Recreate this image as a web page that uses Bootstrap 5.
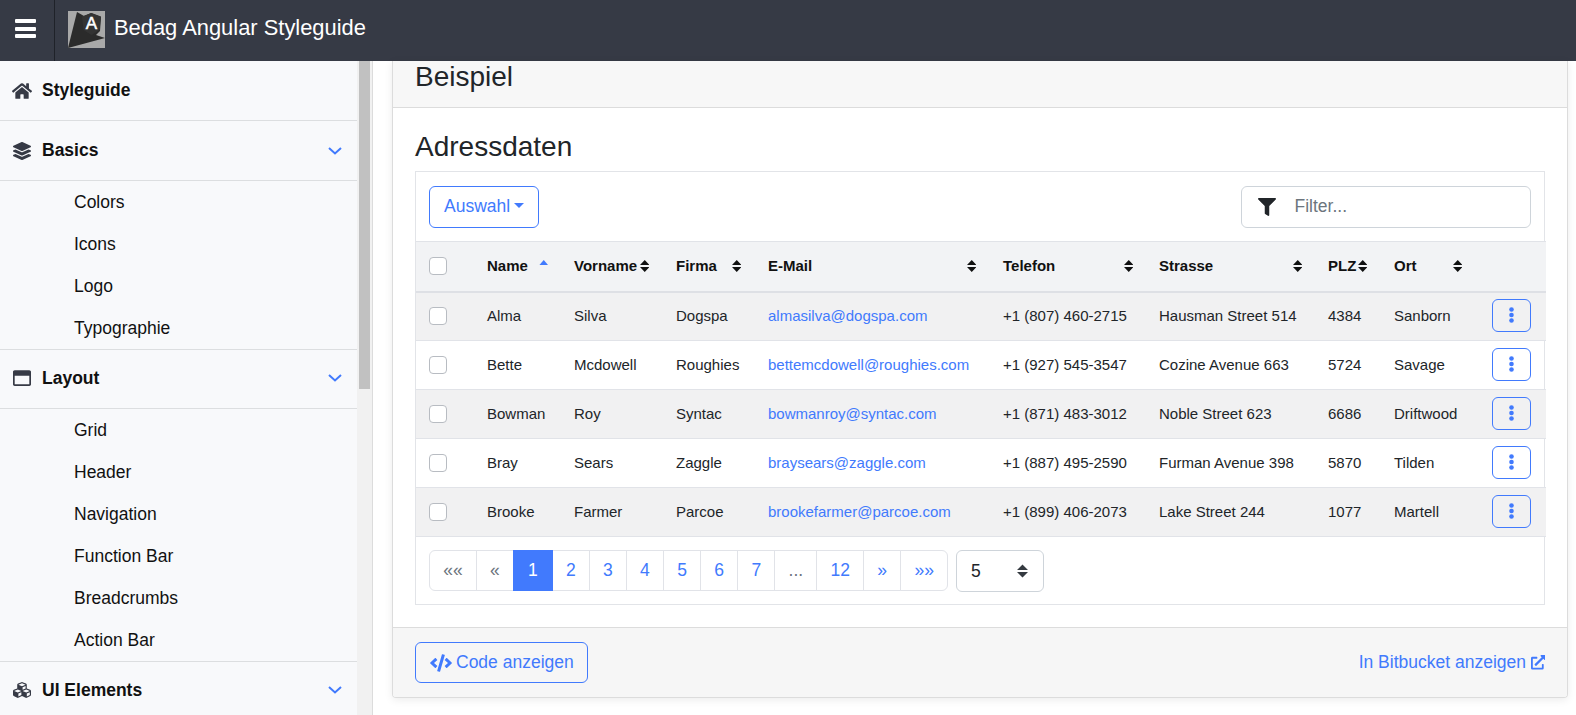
<!DOCTYPE html>
<html lang="de">
<head>
<meta charset="utf-8">
<title>Bedag Angular Styleguide</title>
<link rel="stylesheet" href="https://cdn.jsdelivr.net/npm/bootstrap@5.3.0/dist/css/bootstrap.min.css">
<style>
html,body{height:715px;overflow:hidden}
body{font-family:"Liberation Sans",Arial,sans-serif;font-size:17.5px;color:#212529;background:#fff}
svg{fill:currentColor;display:inline-block}
.topbar{height:61px;background:#363a45;color:#fff}
.burger{width:55px;height:61px;border-right:1px solid #1f2229;padding:0 4px 4px 0;gap:3.5px}
.burger span{display:block;width:21px;height:4px;background:#fff;border-radius:1px}
.brandname{font-size:21.9px;margin:0 0 4px 9px}
.logo{margin:0 0 2px 13px}
.logotext{stroke:#fff;stroke-width:.5px}
.shell{height:654px}
.sidenav{width:373px;background:#f8f9fb;border-right:1px solid #dcdcdc;overflow:hidden}
.navcol{width:357px}
.navhead{height:60px;padding:0 15px 0 13px;border-bottom:1px solid #dcdee0;font-weight:700;color:#111}
.subnav + .navhead{height:59px;padding-bottom:2px}
.navhead .ico{width:18px;height:18px;color:#363a45;margin-right:11px;flex:none}
.navhead .ico-wide{width:20px;margin-left:-1px;margin-right:10px}
.navhead .chev{color:#417afd;margin-left:auto}
.subnav{border-bottom:1px solid #dcdee0;margin:0;padding:0;list-style:none}
.subnav li{height:42px;line-height:42px;padding-left:74px;color:#111}
.trackbar{width:15px;background:#f1f1f1;padding-left:2px}
.thumbbar{width:11px;height:328px;background:#c1c1c1}
.mainarea{padding:0 8px 0 19px;min-width:0}
.democard{box-shadow:0 2px 8px rgba(0,0,0,.08);border:1px solid #dcdcdc;border-top:0;border-radius:0 0 4px 4px;overflow:hidden}
.demohead{height:47px;background:#f7f7f7;border-bottom:1px solid #dcdcdc;padding:0 22px 14px;font-size:28px;line-height:32px}
.demobody{padding:22px 22px 22px;height:519px}
.h-addr{font-size:28px;line-height:34px;margin:0 0 7px}
.gridbox{border:1px solid #e2e4e8;height:434px}
.tools{height:69px;padding:0 13px}
.btn-blue{--bs-btn-color:#417afd;--bs-btn-border-color:#417afd;--bs-btn-hover-bg:#417afd;--bs-btn-hover-border-color:#417afd;--bs-btn-active-bg:#417afd;--bs-btn-active-border-color:#417afd;font-size:17.5px;height:42px;padding:0 14px}
.btn-blue.dropdown-toggle::after{margin-left:4px}
.codebtn{height:41px;padding-right:13px}
.filterbox{width:290px;height:42px;border:1px solid #ced4da;border-radius:6px;padding-left:16px;gap:18.5px}
.filterbox svg{color:#212529;flex:none}
.filterbox input{border:0;outline:0;padding:0;font-size:17.5px;width:200px;background:transparent}
.filterbox input::placeholder{color:#6c757d}
.dtable{table-layout:fixed;width:100%;margin:0;font-size:15px;--bs-table-striped-bg:#f1f1f2;--bs-table-border-color:#e1e3e8}
.dtable th,.dtable td{padding:0 14px;vertical-align:middle;height:49px;white-space:nowrap;overflow:hidden}
.dtable th:first-child,.dtable td:first-child{padding-left:13px}
.dtable th:last-child,.dtable td:last-child{padding-right:15px}
.dtable thead th{background:#f2f3f5;height:50px;color:#111;border-bottom:2px solid #dee0e5;border-top:1px solid #e1e3e8;overflow:visible}
.c1{width:57px}.c2{width:87px}.c3{width:102px}.c4{width:92px}.c5{width:235px}.c6{width:156px}.c7{width:169px}.c8{width:66px}.c9{width:98px}.c10{width:68px}
.dtable a{color:#417afd;text-decoration:none}
.hcell{display:flex;justify-content:space-between;align-items:center}
.sorter{display:block;width:9.5px;height:12px;flex:none;margin-right:-1px}
.dtable th:nth-child(6) .sorter,.dtable th:nth-child(7) .sorter{margin-right:-2px}
.dtable th:nth-child(9) .sorter{margin-right:2px}
.sorter.asc{color:#417afd;height:5.5px;margin-top:-8px;margin-right:-2px}
.rowbox{appearance:none;display:block;width:18px;height:18px;border:1px solid #b8bcc2;border-radius:4px;background:#fff;margin:0}
.rowbtn{width:39px;height:33px;padding:0;display:flex;align-items:center;justify-content:center;--bs-btn-color:#417afd;--bs-btn-border-color:#417afd;margin:0 0 2px auto}
.pagerow{padding:13px 13px 0}
.pagination{--bs-pagination-color:#417afd;--bs-pagination-padding-x:13.2px;--bs-pagination-padding-y:0;--bs-pagination-font-size:17.5px;--bs-pagination-border-color:#e1e3e8;--bs-pagination-disabled-color:#6c757d;--bs-pagination-disabled-bg:#fff;--bs-pagination-disabled-border-color:#e1e3e8;--bs-pagination-active-bg:#417afd;--bs-pagination-active-border-color:#417afd;margin:0}
.pagination .page-link{line-height:39px}
.pagination .active .page-link{padding-left:14px;padding-right:14px}
.sizepick{width:88px;height:42px;border:1px solid #ced4da;border-radius:6px;padding:0 15px 0 14px;margin-left:8px}
.demofoot{height:70px;background:#f6f6f6;border-top:1px solid #dcdcdc;padding:0 22px}
.bb-link{color:#417afd;text-decoration:none;gap:4.5px}
</style>
</head>
<body>
<header class="topbar d-flex align-items-center">
  <div class="burger d-flex flex-column align-items-center justify-content-center">
    <span></span><span></span><span></span>
  </div>
  <svg class="logo" width="37" height="37" viewBox="0 0 37 37">
    <rect width="37" height="37" fill="#a9a9a9"/>
    <path d="M9 1L16 5L23 2L33 6L32 20L28 24L37 27L0 37Z" fill="#2b2b2b"/>
    <path d="M23.5 2L33 5.500L31.500 19L23.500 24L15.500 19L14 5.500Z" fill="#333"/>
    <text class="logotext" x="23.500" y="18" text-anchor="middle" font-family="Liberation Sans" font-size="17" fill="#fff">A</text>
  </svg>
  <span class="brandname">Bedag Angular Styleguide</span>
</header>
<div class="shell d-flex">
  <nav class="sidenav d-flex flex-shrink-0">
    <div class="navcol">
      <div class="navhead d-flex align-items-center"><svg class="ico ico-wide" viewBox="0 0 576 512"><path d="M280.37 148.26L96 300.11V464a16 16 0 0 0 16 16l112.06-.29a16 16 0 0 0 15.92-16V368a16 16 0 0 1 16-16h64a16 16 0 0 1 16 16v95.64a16 16 0 0 0 16 16.05L464 480a16 16 0 0 0 16-16V300L295.67 148.26a12.19 12.19 0 0 0-15.3 0zM571.6 251.47L488 182.56V44.05a12 12 0 0 0-12-12h-56a12 12 0 0 0-12 12v72.61L318.47 43a48 48 0 0 0-61 0L4.34 251.47a12 12 0 0 0-1.6 16.9l25.5 31A12 12 0 0 0 45.15 301l235.22-193.74a12.19 12.19 0 0 1 15.3 0L530.9 301a12 12 0 0 0 16.9-1.6l25.5-31a12 12 0 0 0-1.7-16.93z"/></svg>Styleguide</div>
      <div class="navhead d-flex align-items-center"><svg class="ico" viewBox="0 0 512 512"><path d="M12.41 148.02l232.94 105.67c6.8 3.09 14.49 3.09 21.29 0l232.94-105.67c16.55-7.51 16.55-32.52 0-40.03L266.65 2.31a25.607 25.607 0 0 0-21.29 0L12.41 107.98c-16.55 7.51-16.55 32.53 0 40.04zm487.18 88.28l-58.09-26.33-161.64 73.27c-7.56 3.43-15.59 5.17-23.86 5.17s-16.29-1.74-23.86-5.17L70.51 209.97l-58.1 26.33c-16.55 7.5-16.55 32.5 0 40l232.94 105.59c6.8 3.08 14.49 3.08 21.29 0L499.59 276.3c16.55-7.5 16.55-32.5 0-40zm0 127.8l-57.87-26.23-161.86 73.37c-7.56 3.43-15.59 5.17-23.86 5.17s-16.29-1.74-23.86-5.17L70.29 337.87 12.41 364.1c-16.55 7.5-16.55 32.5 0 40l232.94 105.59c6.8 3.08 14.49 3.08 21.29 0L499.59 404.1c16.55-7.5 16.55-32.5 0-40z"/></svg>Basics<svg class="chev" width="14" height="8" viewBox="0 0 14 8"><path d="M1 1l6 5.500L13 1" fill="none" stroke="currentColor" stroke-width="2"/></svg></div>
      <ul class="subnav"><li>Colors</li><li>Icons</li><li>Logo</li><li>Typographie</li></ul>
      <div class="navhead d-flex align-items-center"><svg class="ico" viewBox="0 0 512 512"><path d="M464 32H48C21.5 32 0 53.5 0 80v352c0 26.5 21.5 48 48 48h416c26.5 0 48-21.5 48-48V80c0-26.5-21.5-48-48-48zm0 394c0 3.3-2.7 6-6 6H54c-3.3 0-6-2.7-6-6V192h416v234z"/></svg>Layout<svg class="chev" width="14" height="8" viewBox="0 0 14 8"><path d="M1 1l6 5.500L13 1" fill="none" stroke="currentColor" stroke-width="2"/></svg></div>
      <ul class="subnav"><li>Grid</li><li>Header</li><li>Navigation</li><li>Function Bar</li><li>Breadcrumbs</li><li>Action Bar</li></ul>
      <div class="navhead d-flex align-items-center"><svg class="ico" viewBox="0 0 512 512"><path d="M488.6 250.2L392 214V105.5c0-15-9.3-28.4-23.4-33.7l-100-37.5c-8.1-3.1-17.1-3.1-25.3 0l-100 37.5c-14.1 5.3-23.4 18.7-23.4 33.7V214l-96.6 36.2C9.3 255.5 0 268.9 0 283.9V394c0 13.6 7.7 26.1 19.900 32.2l100 50c10.1 5.1 22.1 5.1 32.2 0l103.9-52 103.9 52c10.1 5.1 22.1 5.1 32.2 0l100-50c12.2-6.1 19.9-18.6 19.9-32.2V283.9c0-15-9.3-28.4-23.4-33.7zM358 214.8l-85 31.9v-68.2l85-37v73.3zM154 104.1l102-38.2 102 38.2v.6l-102 41.4-102-41.4v-.6zm84 291.1l-85 42.5v-79.1l85-38.8v75.4zm0-112l-102 41.4-102-41.4v-.6l102-38.2 102 38.2v.6zm240 112l-85 42.5v-79.1l85-38.8v75.4zm0-112l-102 41.4-102-41.4v-.6l102-38.2 102 38.2v.6z"/></svg>UI Elements<svg class="chev" width="14" height="8" viewBox="0 0 14 8"><path d="M1 1l6 5.500L13 1" fill="none" stroke="currentColor" stroke-width="2"/></svg></div>
    </div>
    <div class="trackbar"><div class="thumbbar"></div></div>
  </nav>
  <main class="mainarea flex-grow-1">
    <section class="democard">
      <div class="demohead d-flex align-items-center">Beispiel</div>
      <div class="demobody">
        <h2 class="h-addr fw-normal">Adressdaten</h2>
        <div class="gridbox">
          <div class="tools d-flex align-items-center justify-content-between">
            <button class="btn btn-blue dropdown-toggle" type="button">Auswahl</button>
            <div class="filterbox d-flex align-items-center"><svg width="18" height="18" viewBox="0 0 512 512"><path d="M487.976 0H24.028C2.71 0-8.047 25.866 7.058 40.971L192 225.941V432c0 7.831 3.821 15.17 10.237 19.662l80 55.98C298.02 518.69 320 507.493 320 487.98V225.941l184.947-184.97C520.021 25.896 509.338 0 487.976 0z"/></svg><input type="text" placeholder="Filter..."></div>
          </div>
          <table class="table table-striped dtable">
            <colgroup><col class="c1"><col class="c2"><col class="c3"><col class="c4"><col class="c5"><col class="c6"><col class="c7"><col class="c8"><col class="c9"><col class="c10"></colgroup>
            <thead><tr>
              <th><input class="rowbox" type="checkbox"></th>
              <th><div class="hcell">Name<svg class="sorter asc" viewBox="0 0 10 5" preserveAspectRatio="none"><path d="M5 0l5 5H0z"/></svg></div></th>
              <th><div class="hcell">Vorname<svg class="sorter" viewBox="0 0 10 12" preserveAspectRatio="none"><path d="M5 0l5 5H0zM0 7h10l-5 5z"/></svg></div></th>
              <th><div class="hcell">Firma<svg class="sorter" viewBox="0 0 10 12" preserveAspectRatio="none"><path d="M5 0l5 5H0zM0 7h10l-5 5z"/></svg></div></th>
              <th><div class="hcell">E-Mail<svg class="sorter" viewBox="0 0 10 12" preserveAspectRatio="none"><path d="M5 0l5 5H0zM0 7h10l-5 5z"/></svg></div></th>
              <th><div class="hcell">Telefon<svg class="sorter" viewBox="0 0 10 12" preserveAspectRatio="none"><path d="M5 0l5 5H0zM0 7h10l-5 5z"/></svg></div></th>
              <th><div class="hcell">Strasse<svg class="sorter" viewBox="0 0 10 12" preserveAspectRatio="none"><path d="M5 0l5 5H0zM0 7h10l-5 5z"/></svg></div></th>
              <th><div class="hcell">PLZ<svg class="sorter" viewBox="0 0 10 12" preserveAspectRatio="none"><path d="M5 0l5 5H0zM0 7h10l-5 5z"/></svg></div></th>
              <th><div class="hcell">Ort<svg class="sorter" viewBox="0 0 10 12" preserveAspectRatio="none"><path d="M5 0l5 5H0zM0 7h10l-5 5z"/></svg></div></th>
              <th></th>
            </tr></thead>
            <tbody>
              <tr><td><input class="rowbox" type="checkbox"></td><td>Alma</td><td>Silva</td><td>Dogspa</td><td><a href="#">almasilva@dogspa.com</a></td><td>+1 (807) 460-2715</td><td>Hausman Street 514</td><td>4384</td><td>Sanborn</td><td><button class="btn rowbtn" type="button"><svg width="5" height="16" viewBox="0 0 5 16"><circle cx="2.500" cy="2.500" r="2.300"/><circle cx="2.500" cy="8" r="2.300"/><circle cx="2.500" cy="13.500" r="2.300"/></svg></button></td></tr>
              <tr><td><input class="rowbox" type="checkbox"></td><td>Bette</td><td>Mcdowell</td><td>Roughies</td><td><a href="#">bettemcdowell@roughies.com</a></td><td>+1 (927) 545-3547</td><td>Cozine Avenue 663</td><td>5724</td><td>Savage</td><td><button class="btn rowbtn" type="button"><svg width="5" height="16" viewBox="0 0 5 16"><circle cx="2.500" cy="2.500" r="2.300"/><circle cx="2.500" cy="8" r="2.300"/><circle cx="2.500" cy="13.500" r="2.300"/></svg></button></td></tr>
              <tr><td><input class="rowbox" type="checkbox"></td><td>Bowman</td><td>Roy</td><td>Syntac</td><td><a href="#">bowmanroy@syntac.com</a></td><td>+1 (871) 483-3012</td><td>Noble Street 623</td><td>6686</td><td>Driftwood</td><td><button class="btn rowbtn" type="button"><svg width="5" height="16" viewBox="0 0 5 16"><circle cx="2.500" cy="2.500" r="2.300"/><circle cx="2.500" cy="8" r="2.300"/><circle cx="2.500" cy="13.500" r="2.300"/></svg></button></td></tr>
              <tr><td><input class="rowbox" type="checkbox"></td><td>Bray</td><td>Sears</td><td>Zaggle</td><td><a href="#">braysears@zaggle.com</a></td><td>+1 (887) 495-2590</td><td>Furman Avenue 398</td><td>5870</td><td>Tilden</td><td><button class="btn rowbtn" type="button"><svg width="5" height="16" viewBox="0 0 5 16"><circle cx="2.500" cy="2.500" r="2.300"/><circle cx="2.500" cy="8" r="2.300"/><circle cx="2.500" cy="13.500" r="2.300"/></svg></button></td></tr>
              <tr><td><input class="rowbox" type="checkbox"></td><td>Brooke</td><td>Farmer</td><td>Parcoe</td><td><a href="#">brookefarmer@parcoe.com</a></td><td>+1 (899) 406-2073</td><td>Lake Street 244</td><td>1077</td><td>Martell</td><td><button class="btn rowbtn" type="button"><svg width="5" height="16" viewBox="0 0 5 16"><circle cx="2.500" cy="2.500" r="2.300"/><circle cx="2.500" cy="8" r="2.300"/><circle cx="2.500" cy="13.500" r="2.300"/></svg></button></td></tr>
            </tbody>
          </table>
          <div class="pagerow d-flex align-items-start">
            <ul class="pagination">
              <li class="page-item disabled"><a class="page-link" href="#">««</a></li>
              <li class="page-item disabled"><a class="page-link" href="#">«</a></li>
              <li class="page-item active"><a class="page-link" href="#">1</a></li>
              <li class="page-item"><a class="page-link" href="#">2</a></li>
              <li class="page-item"><a class="page-link" href="#">3</a></li>
              <li class="page-item"><a class="page-link" href="#">4</a></li>
              <li class="page-item"><a class="page-link" href="#">5</a></li>
              <li class="page-item"><a class="page-link" href="#">6</a></li>
              <li class="page-item"><a class="page-link" href="#">7</a></li>
              <li class="page-item disabled"><a class="page-link" href="#">...</a></li>
              <li class="page-item"><a class="page-link" href="#">12</a></li>
              <li class="page-item"><a class="page-link" href="#">»</a></li>
              <li class="page-item"><a class="page-link" href="#">»»</a></li>
            </ul>
            <div class="sizepick d-flex align-items-center justify-content-between"><span>5</span><svg width="11" height="14" viewBox="0 0 10 12"><path d="M5 0l5 5H0zM0 7h10l-5 5z" fill="#343a40"/></svg></div>
          </div>
        </div>
      </div>
      <div class="demofoot d-flex align-items-center justify-content-between">
        <button class="btn btn-blue codebtn d-flex align-items-center gap-1" type="button"><svg width="22" height="18" viewBox="0 0 640 512"><path d="M278.9 511.5l-61-17.7c-6.4-1.8-10-8.5-8.2-14.9L346.2 8.7c1.8-6.4 8.5-10 14.9-8.2l61 17.7c6.4 1.8 10 8.5 8.2 14.9L293.8 503.3c-1.9 6.4-8.5 10.1-14.9 8.2zm-114-112.2l43.5-46.4c4.6-4.9 4.3-12.7-.8-17.2L117 256l90.6-79.7c5.1-4.5 5.5-12.3.8-17.2l-43.5-46.4c-4.5-4.8-12.1-5.1-17-.5L3.8 247.2c-5.1 4.7-5.1 12.8 0 17.5l144.1 135.1c4.9 4.6 12.5 4.4 17-.5zm327.2.6l144.1-135.1c5.1-4.7 5.1-12.8 0-17.5L492.1 112.1c-4.8-4.5-12.4-4.3-17 .5L431.6 159c-4.6 4.9-4.3 12.7.8 17.2L523 256l-90.6 79.7c-5.1 4.5-5.5 12.3-.8 17.2l43.5 46.4c4.5 4.9 12.1 5.1 17 .6z"/></svg>Code anzeigen</button>
        <a class="bb-link d-flex align-items-center" href="#">In Bitbucket anzeigen<svg width="14.5" height="14.5" viewBox="0 0 512 512"><path d="M432 320h-32a16 16 0 0 0-16 16v112H64V128h144a16 16 0 0 0 16-16V80a16 16 0 0 0-16-16H48a48 48 0 0 0-48 48v352a48 48 0 0 0 48 48h352a48 48 0 0 0 48-48V336a16 16 0 0 0-16-16zM488 0H360c-21.370 0-32.050 25.910-17 41l35.730 35.730L135 320.370a24 24 0 0 0 0 34L157.670 377a24 24 0 0 0 34 0l243.610-243.680L471 169c15 15 41 4.500 41-17V24a24 24 0 0 0-24-24z"/></svg></a>
      </div>
    </section>
  </main>
</div>
<script src="https://cdn.jsdelivr.net/npm/bootstrap@5.3.0/dist/js/bootstrap.bundle.min.js"></script>
</body>
</html>
